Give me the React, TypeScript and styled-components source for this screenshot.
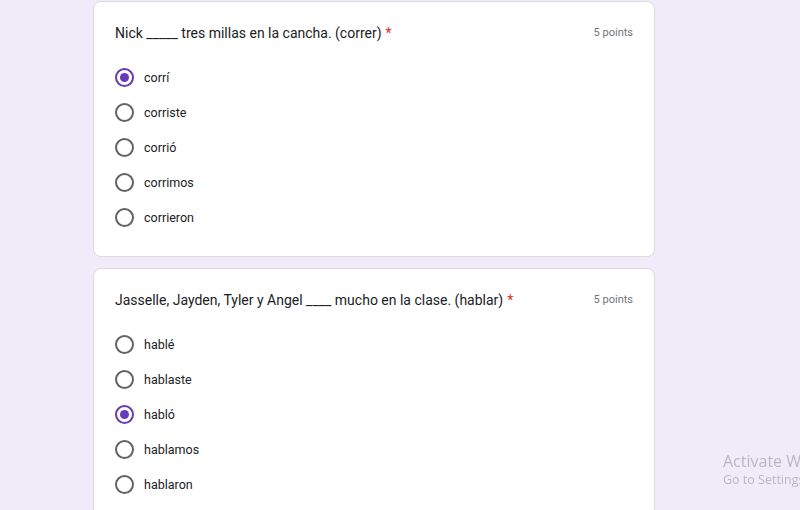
import React from 'react'
import styled, { createGlobalStyle } from 'styled-components'

const GlobalStyle = createGlobalStyle`
  html, body {
    margin: 0;
    padding: 0;
    background: #f0ebf8;
    font-family: Roboto, 'Liberation Sans', Arial, sans-serif;
    overflow: hidden;
  }
`

const Page = styled.div`
  display: flex;
  flex-direction: column;
  gap: 11px;
  width: 655px;
  height: 510px;
  padding: 1px 0 0 93px;
  box-sizing: border-box;
`

const Card = styled.div`
  flex-shrink: 0;
  background: #fff;
  border: 1px solid #dadce0;
  border-radius: 8px;
  padding: 20px 21px 21px 21px;
`

const Header = styled.div`
  display: flex;
  justify-content: space-between;
  align-items: flex-start;
  margin-bottom: 16px;
`

const Question = styled.div`
  font-size: 14px;
  line-height: 22px;
  color: #202124;
`

const Required = styled.span`
  color: #d93025;
  margin-left: 4px;
`

const Points = styled.div`
  font-size: 11px;
  line-height: 22px;
  color: #70757a;
`

const Options = styled.div`
  display: flex;
  flex-direction: column;
`

const Option = styled.label`
  display: flex;
  align-items: center;
  height: 35px;
  gap: 10px;
  font-size: 12.5px;
  color: #202124;
`

const Radio = styled.span<{ $checked?: boolean }>`
  width: 19px;
  height: 19px;
  box-sizing: border-box;
  border-radius: 50%;
  border: 2px solid ${(p) => (p.$checked ? '#673ab7' : '#5f6368')};
  display: flex;
  align-items: center;
  justify-content: center;

  &::after {
    content: '';
    display: ${(p) => (p.$checked ? 'block' : 'none')};
    width: 9px;
    height: 9px;
    border-radius: 50%;
    background: #673ab7;
  }
`

const Watermark = styled.div`
  position: fixed;
  left: 723px;
  top: 451px;
  white-space: nowrap;
  font-family: 'Open Sans', 'DejaVu Sans', sans-serif;
  color: rgba(120, 120, 130, 0.45);
`

const WatermarkTitle = styled.div`
  font-size: 16px;
  line-height: 20px;
`

const WatermarkSub = styled.div`
  font-size: 12.5px;
  line-height: 18px;
`

const questions = [
  {
    text: 'Nick _____ tres millas en la cancha. (correr)',
    options: ['corrí', 'corriste', 'corrió', 'corrimos', 'corrieron'],
    selected: 0,
  },
  {
    text: 'Jasselle, Jayden, Tyler y Angel ____ mucho en la clase. (hablar)',
    options: ['hablé', 'hablaste', 'habló', 'hablamos', 'hablaron'],
    selected: 2,
  },
]

const App = () => (
  <>
    <GlobalStyle />
    <Page>
      {questions.map((q) => (
        <Card key={q.text}>
          <Header>
            <Question>
              {q.text}
              <Required>*</Required>
            </Question>
            <Points>5 points</Points>
          </Header>
          <Options>
            {q.options.map((o, i) => (
              <Option key={o}>
                <Radio $checked={i === q.selected} />
                {o}
              </Option>
            ))}
          </Options>
        </Card>
      ))}
    </Page>
    <Watermark>
      <WatermarkTitle>Activate Windows</WatermarkTitle>
      <WatermarkSub>Go to Settings to activate Windows.</WatermarkSub>
    </Watermark>
  </>
)

export default App
